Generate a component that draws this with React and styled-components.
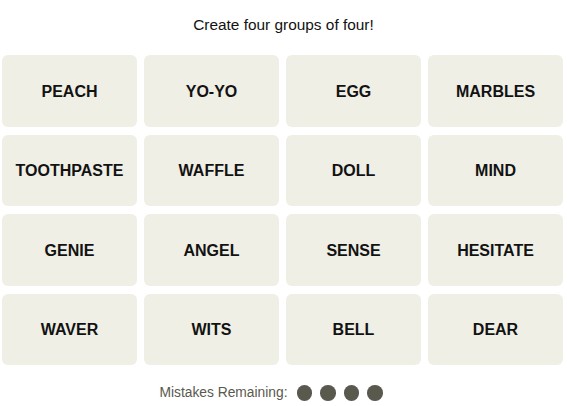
import React from "react";
import styled, { createGlobalStyle } from "styled-components";

const GlobalStyle = createGlobalStyle`
  html, body {
    margin: 0;
    padding: 0;
    background: #ffffff;
    font-family: "Liberation Sans", Arial, sans-serif;
  }
`;

const Page = styled.main`
  width: 567px;
  height: 406px;
  display: flex;
  flex-direction: column;
  align-items: center;
`;

const Prompt = styled.h2`
  margin: 15px 0 0;
  height: 19px;
  font-size: 15.4px;
  font-weight: 400;
  line-height: 19px;
  color: #121212;
`;

const Board = styled.div`
  margin-top: 21px;
  align-self: flex-start;
  margin-left: 2px;
  width: 561px;
  display: grid;
  grid-template-columns: repeat(4, 1fr);
  grid-auto-rows: 71.5px;
  column-gap: 7px;
  row-gap: 8px;
`;

const Tile = styled.button`
  border: none;
  border-radius: 6px;
  background: ${(p) => (p.$selected ? "#5a594e" : "#efefe6")};
  color: ${(p) => (p.$selected ? "#fff" : "#121212")};
  font-family: "Liberation Sans", Arial, sans-serif;
  font-size: 16px;
  font-weight: 700;
  text-transform: uppercase;
  display: flex;
  align-items: center;
  justify-content: center;
  padding: 2px 0 0;
  cursor: pointer;
`;

const Footer = styled.div`
  margin-top: 20px;
  margin-right: 25px;
  display: flex;
  align-items: center;
  gap: 9px;
`;

const Label = styled.span`
  font-size: 13.8px;
  color: #5a594e;
`;

const Dots = styled.div`
  display: flex;
  gap: 8px;
`;

const Dot = styled.span`
  width: 15.5px;
  height: 15.5px;
  border-radius: 50%;
  background: #5a594e;
`;

const words = [
  "Peach", "Yo-yo", "Egg", "Marbles",
  "Toothpaste", "Waffle", "Doll", "Mind",
  "Genie", "Angel", "Sense", "Hesitate",
  "Waver", "Wits", "Bell", "Dear",
];

export default function App() {
  return (
    <>
      <GlobalStyle />
      <Page>
        <Prompt>Create four groups of four!</Prompt>
        <Board>
          {words.map((w) => (
            <Tile key={w}>{w}</Tile>
          ))}
        </Board>
        <Footer>
          <Label>Mistakes Remaining:</Label>
          <Dots>
            {[0, 1, 2, 3].map((i) => (
              <Dot key={i} />
            ))}
          </Dots>
        </Footer>
      </Page>
    </>
  );
}
